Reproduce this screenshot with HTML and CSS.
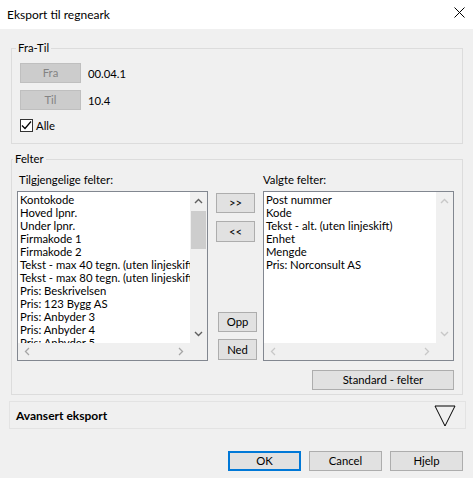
FILE: index.html
```html
<!DOCTYPE html>
<html>
<head>
<meta charset="utf-8">
<link rel="stylesheet" href="styles.css">
</head>
<body>
<div class="titlebar">
  <span class="title">Eksport til regneark</span>
  <svg class="close" width="11" height="11" viewBox="0 0 11 11"><path d="M0.5 0.5 L10.5 10.5 M10.5 0.5 L0.5 10.5" stroke="#000" stroke-width="1" fill="none"/></svg>
</div>
<div class="dialog">
  <fieldset class="group fratil">
    <legend>Fra-Til</legend>
    <div class="row">
      <button class="btn disabled range-btn">Fra</button>
      <span class="value">00.04.1</span>
    </div>
    <div class="row row-til">
      <button class="btn disabled range-btn">Til</button>
      <span class="value">10.4</span>
    </div>
    <label class="check-row">
      <span class="checkbox"><svg width="11" height="11" viewBox="0 0 11 11"><path d="M1 5.5 L4 8.5 L10 1.5" stroke="#000" stroke-width="1.2" fill="none"/></svg></span>
      <span>Alle</span>
    </label>
  </fieldset>

  <fieldset class="group felter">
    <legend>Felter</legend>
    <div class="felter-grid">
      <div class="caption caption-left">Tilgjengelige felter:</div>
      <div></div>
      <div class="caption">Valgte felter:</div>

      <div class="listbox">
        <div class="list-items">
          <div>Kontokode</div>
          <div>Hoved lpnr.</div>
          <div>Under lpnr.</div>
          <div>Firmakode 1</div>
          <div>Firmakode 2</div>
          <div>Tekst - max 40 tegn. (uten linjeskift)</div>
          <div>Tekst - max 80 tegn. (uten linjeskift)</div>
          <div>Pris: Beskrivelsen</div>
          <div>Pris: 123 Bygg AS</div>
          <div>Pris: Anbyder 3</div>
          <div>Pris: Anbyder 4</div>
          <div>Pris: Anbyder 5</div>
          <div>Pris: Anbyder 6</div>
        </div>
        <div class="vscroll">
          <svg class="arrow" width="9" height="6" viewBox="0 0 9 6"><path d="M1 5 L4.5 1.5 L8 5" stroke="#606060" stroke-width="1.4" fill="none"/></svg>
          <div class="track"><div class="thumb"></div></div>
          <svg class="arrow" width="9" height="6" viewBox="0 0 9 6"><path d="M1 1 L4.5 4.5 L8 1" stroke="#606060" stroke-width="1.4" fill="none"/></svg>
        </div>
        <div class="hscroll">
          <svg class="arrow" width="6" height="9" viewBox="0 0 6 9"><path d="M5 1 L1.5 4.5 L5 8" stroke="#a6a6a6" stroke-width="1.3" fill="none"/></svg>
          <svg class="arrow" width="6" height="9" viewBox="0 0 6 9"><path d="M1 1 L4.5 4.5 L1 8" stroke="#a6a6a6" stroke-width="1.3" fill="none"/></svg>
        </div>
        <div class="corner"></div>
      </div>

      <div class="mid">
        <button class="btn move-btn first">&gt;&gt;</button>
        <button class="btn move-btn second">&lt;&lt;</button>
        <div class="spacer"></div>
        <button class="btn order-btn">Opp</button>
        <button class="btn order-btn ned">Ned</button>
      </div>

      <div class="listbox">
        <div class="list-items">
          <div>Post nummer</div>
          <div>Kode</div>
          <div>Tekst - alt. (uten linjeskift)</div>
          <div>Enhet</div>
          <div>Mengde</div>
          <div>Pris: Norconsult AS</div>
        </div>
        <div class="vscroll">
          <svg class="arrow" width="9" height="6" viewBox="0 0 9 6"><path d="M1 5 L4.5 1.5 L8 5" stroke="#c8c8c8" stroke-width="1.4" fill="none"/></svg>
          <div class="track"></div>
          <svg class="arrow" width="9" height="6" viewBox="0 0 9 6"><path d="M1 1 L4.5 4.5 L8 1" stroke="#c8c8c8" stroke-width="1.4" fill="none"/></svg>
        </div>
        <div class="hscroll">
          <svg class="arrow" width="6" height="9" viewBox="0 0 6 9"><path d="M5 1 L1.5 4.5 L5 8" stroke="#c8c8c8" stroke-width="1.3" fill="none"/></svg>
          <svg class="arrow" width="6" height="9" viewBox="0 0 6 9"><path d="M1 1 L4.5 4.5 L1 8" stroke="#c8c8c8" stroke-width="1.3" fill="none"/></svg>
        </div>
        <div class="corner"></div>
      </div>
    </div>
    <div class="std-row">
      <button class="btn std-btn">Standard - felter</button>
    </div>
  </fieldset>

  <div class="advanced">
    <span class="adv-label">Avansert eksport</span>
    <svg class="tri" width="22" height="22" viewBox="0 0 22 22"><path d="M1 1 L21 1 L11 21 Z" stroke="#000" stroke-width="1" fill="none"/></svg>
  </div>

  <div class="actions">
    <button class="btn action-btn default">OK</button>
    <button class="btn action-btn">Cancel</button>
    <button class="btn action-btn">Hjelp</button>
  </div>
</div>
</body>
</html>
```

FILE: styles.css
```css
* { box-sizing: border-box; }
html, body {
  margin: 0;
  padding: 0;
}
body {
  width: 473px;
  height: 478px;
  overflow: hidden;
  background: #f0f0f0;
  font-family: Lato, "Liberation Sans", sans-serif;
  font-size: 11.3px;
  color: #000;
}
.titlebar {
  height: 29px;
  background: #fff;
  display: flex;
  align-items: center;
  justify-content: space-between;
  padding: 0 8px 1px 7px;
}
.title {
  font-size: 12px;
}
.close {
  display: block;
  margin-top: -3px;
}
.dialog {
  display: flex;
  flex-direction: column;
}
.group {
  margin: 0 10px 0 11px;
  border: 1px solid #dcdcdc;
  min-width: 0;
}
.group legend {
  padding: 0 2px;
  line-height: 14px;
  margin-left: -4px;
  font-weight: normal;
}
.fratil {
  margin-top: 12px;
  padding: 8px 8px 11px 8px;
}
.row {
  display: flex;
  align-items: center;
  gap: 7px;
  height: 20px;
}
.row-til {
  margin-top: 7px;
}
.btn {
  font-family: inherit;
  font-size: 11.3px;
  color: #000;
  background: #e1e1e1;
  border: 1px solid #adadad;
  border-radius: 0;
  padding: 0;
  margin: 0;
  height: 20px;
  line-height: 18px;
  text-align: center;
}
.btn.disabled {
  background: #cccccc;
  border-color: #bfbfbf;
  color: #838383;
}
.range-btn {
  width: 61px;
}
.check-row {
  display: flex;
  align-items: center;
  gap: 3px;
  margin-top: 9px;
  height: 13px;
}
.checkbox {
  width: 13px;
  height: 13px;
  border: 1px solid #333;
  background: #fff;
  display: flex;
  align-items: center;
  justify-content: center;
}
.checkbox svg { display: block; }
.felter {
  margin-top: 8px;
  padding: 7px 8px 4px 5px;
}
.felter-grid {
  display: grid;
  grid-template-columns: 191px 55px 191px;
  grid-template-rows: 14px 170px;
  row-gap: 4px;
}
.caption {
  line-height: 14px;
}
.caption-left {
  padding-left: 2px;
}
.listbox {
  border: 1px solid #828790;
  background: #fff;
  display: grid;
  grid-template-columns: 1fr 17px;
  grid-template-rows: 1fr 17px;
  overflow: hidden;
}
.list-items {
  padding: 1px 0 0 2px;
  line-height: 13px;
  white-space: nowrap;
  overflow: hidden;
}
.vscroll {
  background: #f0f0f0;
  display: flex;
  flex-direction: column;
  align-items: center;
}
.vscroll .arrow {
  display: block;
  margin: 6px 0;
}
.track {
  flex: 1;
  width: 100%;
  padding: 0 1px;
}
.thumb {
  margin-top: 1px;
  height: 38px;
  background: #cdcdcd;
}
.hscroll {
  background: #f0f0f0;
  display: flex;
  align-items: center;
  justify-content: space-between;
  padding: 0 6px;
}
.hscroll .arrow { display: block; }
.corner {
  background: #f0f0f0;
}
.mid {
  display: flex;
  flex-direction: column;
  align-items: flex-start;
}
.move-btn {
  width: 39px;
  margin-left: 8px;
  height: 20px;
}
.move-btn.first { margin-top: 2px; }
.move-btn.second { margin-top: 8px; height: 21px; }
.spacer { flex: 1; }
.order-btn {
  width: 39px;
  margin-left: 10px;
}
.order-btn.ned {
  margin-top: 7px;
  height: 21px;
  margin-bottom: 1px;
}
.std-row {
  display: flex;
  justify-content: flex-end;
  width: 437px;
  margin-top: 9px;
}
.std-btn {
  width: 142px;
}
.advanced {
  margin: 6px 7px 0 9px;
  height: 28px;
  border: 1px solid #e3e3e3;
  display: flex;
  align-items: center;
  justify-content: space-between;
  padding: 0 9px 0 6px;
}
.adv-label {
  font-weight: bold;
  font-size: 12px;
}
.tri {
  display: block;
  margin-top: 1px;
}
.actions {
  display: flex;
  justify-content: flex-end;
  gap: 8px;
  margin-top: 22px;
  padding-right: 10px;
}
.action-btn {
  width: 73px;
}
.action-btn.default {
  border: 2px solid #0078d7;
  line-height: 16px;
}
```
